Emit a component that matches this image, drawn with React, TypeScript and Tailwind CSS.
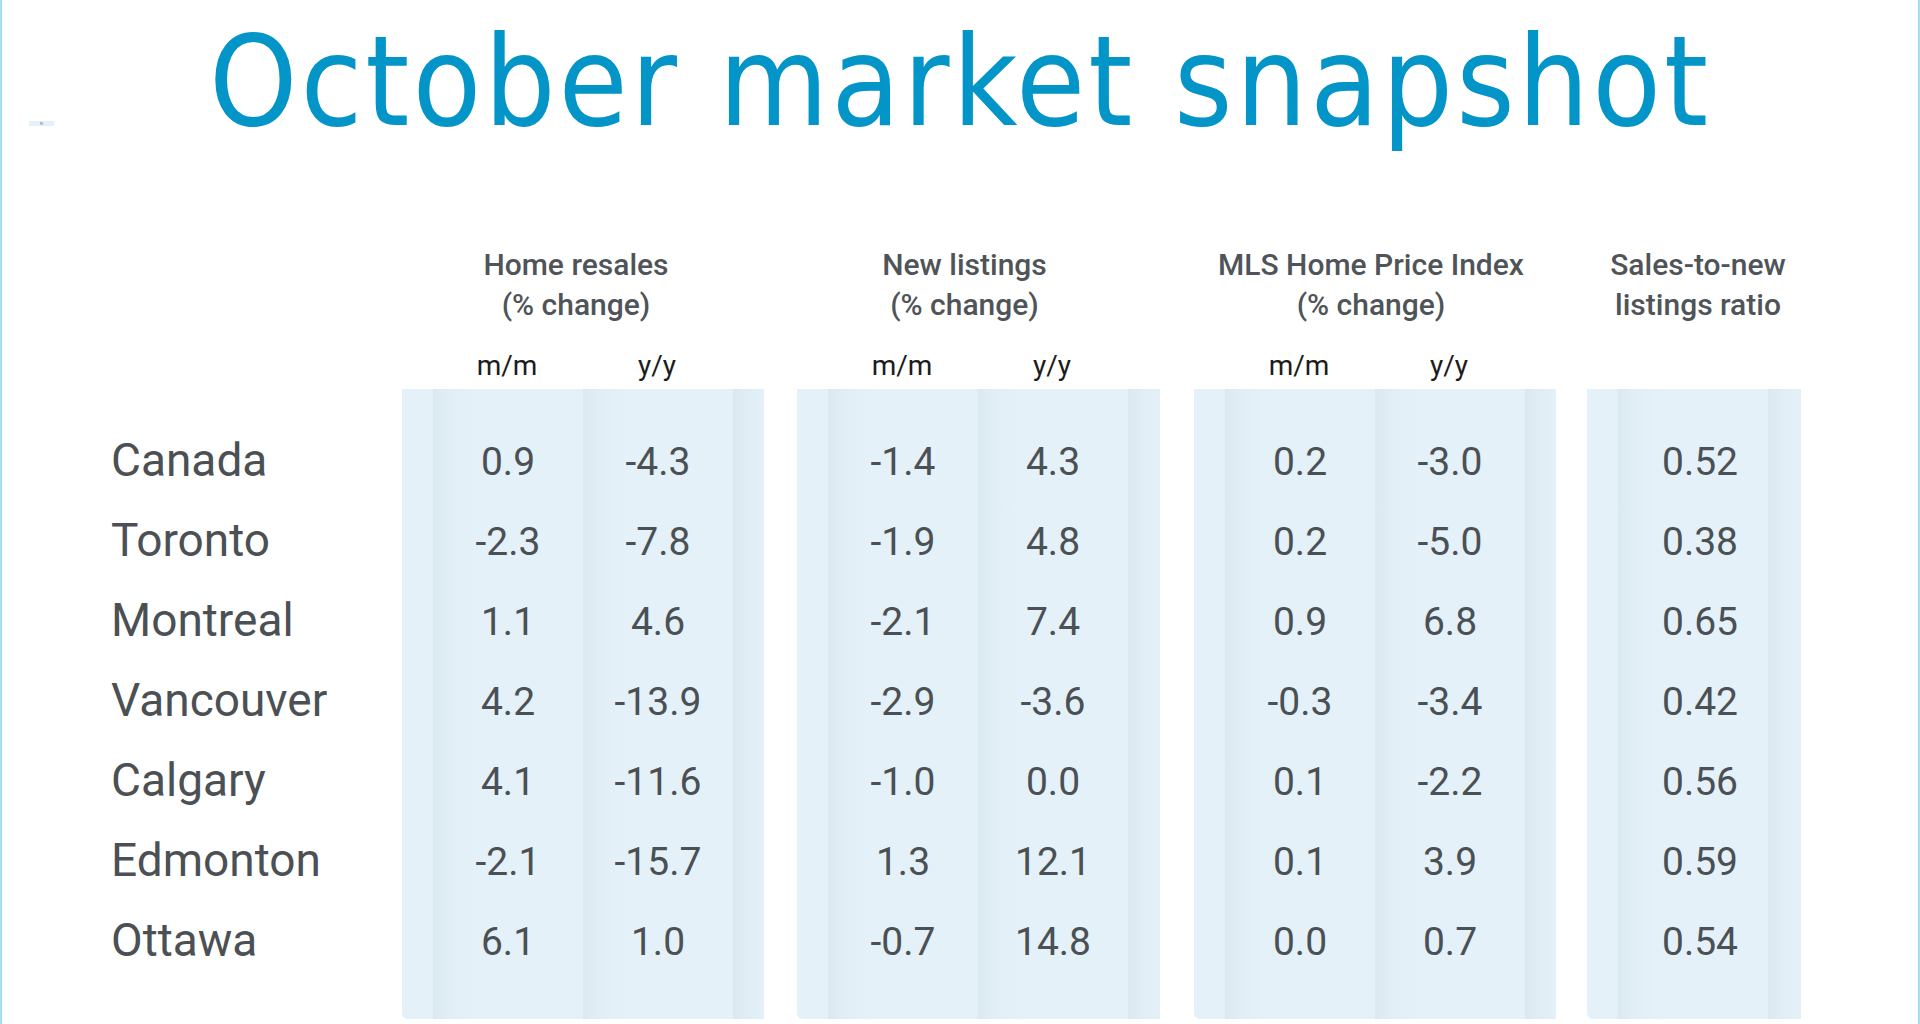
import React from 'react';

const CITIES = ['Canada', 'Toronto', 'Montreal', 'Vancouver', 'Calgary', 'Edmonton', 'Ottawa'];

const GROUPS = [
  {
    title: ['Home resales', '(% change)'],
    cols: [
      ['0.9', '-2.3', '1.1', '4.2', '4.1', '-2.1', '6.1'],
      ['-4.3', '-7.8', '4.6', '-13.9', '-11.6', '-15.7', '1.0'],
    ],
    width: 'w-[362px]',
    margin: '',
    head: 'pr-[14px]',
    cell: '',
  },
  {
    title: ['New listings', '(% change)'],
    cols: [
      ['-1.4', '-1.9', '-2.1', '-2.9', '-1.0', '1.3', '-0.7'],
      ['4.3', '4.8', '7.4', '-3.6', '0.0', '12.1', '14.8'],
    ],
    width: 'w-[363px]',
    margin: 'ml-[33px]',
    head: 'pr-[28px]',
    cell: '',
  },
  {
    title: ['MLS Home Price Index', '(% change)'],
    cols: [
      ['0.2', '0.2', '0.9', '-0.3', '0.1', '0.1', '0.0'],
      ['-3.0', '-5.0', '6.8', '-3.4', '-2.2', '3.9', '0.7'],
    ],
    width: 'w-[362px]',
    margin: 'ml-[34px]',
    head: 'pr-[8px]',
    cell: '',
  },
  {
    title: ['Sales-to-new', 'listings ratio'],
    cols: [['0.52', '0.38', '0.65', '0.42', '0.56', '0.59', '0.54']],
    width: 'w-[214px]',
    margin: 'ml-[31px]',
    head: 'pl-[8px]',
    cell: 'pl-[14px]',
  },
];

// faint fold on the left side of each column strip
const fold = 'bg-[linear-gradient(90deg,#dae8ef_0px,#e1eef5_16px,#e4f1f8_40px)]';

function Group({ g }: { g: (typeof GROUPS)[number] }) {
  const sub = g.cols.length === 2 ? ['m/m', 'y/y'] : [''];
  return (
    <div className={`${g.width} ${g.margin} flex flex-col`}>
      <div className={`h-[80px] ${g.head} text-center text-[30px] font-medium leading-[40px] text-[#4f5458]`}>
        <div>{g.title[0]}</div>
        <div>{g.title[1]}</div>
      </div>
      <div className="mt-[21px] flex h-[40px] pl-[30px] text-[28px] leading-[40px] text-[#1c1c1c]">
        {sub.map((s, i) => (
          <div key={i} className="w-[150px] text-center">
            {s}
          </div>
        ))}
      </div>
      <div className="mt-[3px] flex h-[630px] rounded-b-[6px] bg-[#e4f1f8] pl-[31px]">
        {g.cols.map((col, i) => (
          <div key={i} className={`w-[150px] pt-[33px] ${fold}`}>
            {col.map((v, j) => (
              <div
                key={j}
                className={`flex h-[80px] items-center justify-center ${g.cell} text-[39px] text-[#4b5054]`}
              >
                {v}
              </div>
            ))}
          </div>
        ))}
        <div className={`flex-1 ${fold}`} />
      </div>
    </div>
  );
}

export default function App() {
  return (
    <div
      className="relative h-[1024px] w-[1920px] overflow-hidden border-x-2 border-[#a6dcf3] bg-white"
      style={{ fontFamily: 'Roboto, "Liberation Sans", sans-serif' }}
    >
      <div className="absolute left-[27px] top-[121px] flex h-[5px] w-[25px] items-center justify-center bg-[#e3f1f8] text-[4px] leading-none text-[#777]">
        N
      </div>
      <div className="h-[245px] pt-[12px]">
        <h1
          className="text-center text-[125px] leading-[140px] tracking-[3px] text-[#0394c8]"
          style={{ fontFamily: '"Liberation Sans Narrow", "DejaVu Sans Condensed", "Open Sans", sans-serif' }}
        >
          October market snapshot
        </h1>
      </div>
      <div className="flex">
        <div className="w-[400px] pl-[109px] pt-[177px]">
          {CITIES.map((c) => (
            <div key={c} className="flex h-[80px] items-center pb-[4px] text-[46px] text-[#4b5054]">
              {c}
            </div>
          ))}
        </div>
        {GROUPS.map((g, i) => (
          <Group key={i} g={g} />
        ))}
      </div>
    </div>
  );
}
